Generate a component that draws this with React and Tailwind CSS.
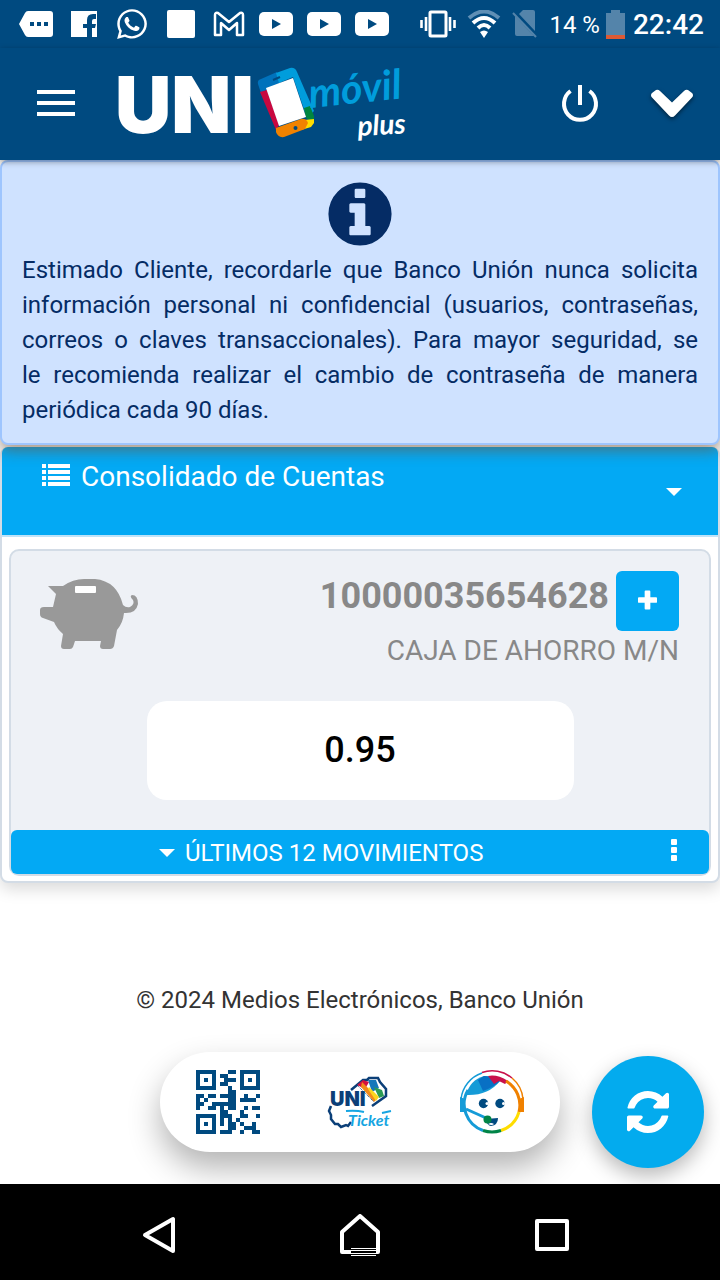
import React from "react";
import { FaWhatsapp } from "react-icons/fa";

const QR_ROWS = [
  "#####...##.#####",
  "#...#.##...#...#",
  "#.#.#..###.#.#.#",
  "#...#.##...#...#",
  "#####...#..#####",
  "........##......",
  "##.##.####..#..#",
  "#.#.....##.####.",
  "##..######......",
  "#..##.#.##..#.##",
  "......##...#....",
  "#####.###..##..#",
  "#...#.#.#.#.....",
  "#.#.#.#.##.#..#.",
  "#...#...##..###.",
  "#####.###..#..##",
];

function YoutubeIcon() {
  return (
    <svg width="34" height="24" viewBox="0 0 34 24">
      <rect width="34" height="24" rx="5" fill="white" />
      <path d="M13 7v10l9-5z" fill="#004a80" />
    </svg>
  );
}

function StatusBar() {
  return (
    <div className="flex h-12 items-center justify-between bg-[#004a80] pr-4 pl-[19px] font-[Roboto,sans-serif] text-white">
      <div className="flex items-center gap-[14px]">
        <div className="flex items-center gap-[18px]">
          <svg width="34" height="26" viewBox="0 0 34 26">
            <path d="M9 0h22q3 0 3 3v20q0 3-3 3H9q-2 0-3-2L0 13 6 2q1-2 3-2z" fill="white" />
            <path d="M11 11h4v4h-4zM18 11h4v4h-4zM25 11h4v4h-4z" fill="#004a80" />
          </svg>
          <svg width="26" height="26" viewBox="0 0 26 26">
            <path d="M0 0h26v26h-5v-9h3l1-4h-4v-3q0-2 2-2h2V3h-3q-6 0-6 6v4h-4v4h4v9H0z" fill="white" />
          </svg>
          <FaWhatsapp size={34} />
          <svg width="28" height="28">
            <rect width="28" height="28" rx="2" fill="white" />
          </svg>
          <svg width="32" height="26" viewBox="0 0 32 26">
            <path
              d="M2 24V4q0-3 3-2l11 9 11-9q3-1 3 2v20h-6V12l-8 7-8-7v12z"
              fill="none"
              stroke="white"
              strokeWidth="2.5"
              strokeLinejoin="round"
            />
          </svg>
        </div>
        <YoutubeIcon />
        <YoutubeIcon />
        <YoutubeIcon />
      </div>
      <div className="flex items-center gap-[6px]">
        <div className="flex items-center gap-[11px]">
          <svg width="36" height="28" viewBox="0 0 36 28">
            <rect x="10" y="2" width="16" height="24" rx="1" fill="none" stroke="white" strokeWidth="3" />
            <path d="M1.500 10v8M6 7v14M30 7v14M34.500 10v8" stroke="white" strokeWidth="2.600" />
          </svg>
          <svg width="34" height="28" viewBox="0 0 34 28" fill="none" strokeWidth="4">
            <path d="M2 8Q17-5 32 8" stroke="#5f8fb5" />
            <path d="M6 13Q17 3 28 13M11 18Q17 12 23 18" stroke="white" />
            <path d="M13 22q4-3 8 0l-4 6z" fill="white" />
          </svg>
          <svg width="26" height="28" viewBox="0 0 26 28">
            <path d="M11 0h10q2 0 2 2v19L7 4zM3 6l19 20H5q-2 0-2-2z" fill="#5484aa" />
            <path d="M1 3l23 24" stroke="#5484aa" strokeWidth="2" />
          </svg>
          <span className="pt-[2px] text-2xl leading-8">14 %</span>
        </div>
        <div className="flex items-center gap-2">
          <svg width="19" height="29" viewBox="0 0 19 29">
            <path d="M5 0h9v3h5v26H0V3h5z" fill="#5484aa" />
            <path d="M0 25h19v4H0z" fill="#dd5a35" />
          </svg>
          <span className="pt-[2px] text-[28px] leading-8 font-medium">22:42</span>
        </div>
      </div>
    </div>
  );
}

function Logo() {
  return (
    <svg width="296" height="110" viewBox="-6 -14 296 110" role="img" aria-label="UNI móvil plus">
      <text x="-3" y="71" fill="white" fontFamily="Inter, sans-serif" fontWeight="900" fontSize="78">
        UNI
      </text>
      <g>
        <path d="M143 31l-3-9q-1-4 3-5l16-7 4 13-15 5z" fill="#0072bc" />
        <path d="M158 11l14-5q5-1 7 4l17 39-7 7-14-41-14 6z" fill="#009ddc" />
        <path d="M142 30l7-2 12 35-3 5z" fill="#c8083f" />
        <path d="M186 46l6-2 4 10v7l-8-5z" fill="#00853f" />
        <path d="M186 58l10-1v4l-3 4-10 3z" fill="#ffdd00" />
        <path d="M158 66l25-9q5-1 7 4l-3 6-21 8q-6 1-8-5z" fill="#f08200" />
        <path d="M148 26l27-10 13 39-27 9z" fill="white" />
        <circle cx="177.500" cy="66" r="2" fill="#004a80" />
        <path d="M155 18l7-3" stroke="#004a80" strokeWidth="2" />
      </g>
      <text
        x="192"
        y="46"
        transform="rotate(-6 192 46)"
        fill="#009ddc"
        fontFamily="Lato, sans-serif"
        fontStyle="italic"
        fontWeight="700"
        fontSize="41"
      >
        móvil
      </text>
      <text
        x="240"
        y="74"
        transform="rotate(-3 240 74)"
        fill="white"
        fontFamily="Lato, sans-serif"
        fontStyle="italic"
        fontWeight="700"
        fontSize="28"
      >
        plus
      </text>
    </svg>
  );
}

function Header() {
  return (
    <header className="relative z-20 flex h-28 items-center justify-between bg-[#004a80] pr-6 pb-[2px] pl-[37px] shadow-[0_2px_6px_rgba(0,0,0,0.35)]">
      <div className="flex items-center gap-[37px]">
        <button aria-label="Menú">
          <svg width="38" height="28" viewBox="0 0 38 28">
            <path d="M0 3h38M0 14h38M0 25h38" stroke="white" strokeWidth="4" />
          </svg>
        </button>
        <Logo />
      </div>
      <div className="flex items-center gap-12">
        <button aria-label="Salir">
          <svg width="40" height="40" viewBox="0 0 40 40" fill="none" stroke="white" strokeWidth="4">
            <path d="M20 2v20" />
            <path d="M10.500 8a16 16 0 1 0 19 0" />
          </svg>
        </button>
        <button aria-label="Más opciones">
          <svg width="48" height="40" viewBox="0 0 48 40" className="drop-shadow-[0_2px_2px_rgba(0,0,0,0.5)]">
            <path
              d="M4 10l4-3q2-1 4 1l12 11.500L36 8q2-2 4-1l4 3q2 2 0 4.500L27 32.500q-3 3-6 0L4 14.500q-2-2.500 0-4.500z"
              fill="white"
            />
          </svg>
        </button>
      </div>
    </header>
  );
}

function InfoIcon() {
  return (
    <svg width="64" height="64" viewBox="0 0 1536 1536" fill="currentColor" className="mx-auto mb-[7px]">
      <path
        fillRule="evenodd"
        d="M1024 1248v-160q0-14-9-23t-23-9h-96V544q0-14-9-23t-23-9H544q-14 0-23 9t-9 23v160q0 14 9 23t23 9h96v320h-96q-14 0-23 9t-9 23v160q0 14 9 23t23 9h448q14 0 23-9t9-23zM896 352V192q0-14-9-23t-23-9H672q-14 0-23 9t-9 23v160q0 14 9 23t23 9h192q14 0 23-9t9-23zM768 10a758 758 0 1 1 0 1516a758 758 0 1 1 0-1516z"
      />
    </svg>
  );
}

function PiggyBank() {
  return (
    <svg width="98" height="70" viewBox="0 0 98 70" fill="#999">
      <path d="M8 7h15Q33 0 44 0h11q22 2 28 26 3 3 7 2 5-3 3-7-4-4-1-5 6 0 6 9-2 10-14 9-1 10-7 17l-3 16q-1 3-4 3h-7q-3 0-3-3l1-5H35l-2 6q-1 2-3 2h-6q-3 0-3-3l2-12q-6-5-9-12L3 39q-3-1-3-4v-4q0-3 4-3h9l3-13z" />
      <rect x="35" y="7" width="21" height="7" rx="1" fill="white" />
    </svg>
  );
}

function CaretDown() {
  return (
    <svg width="16" height="8" viewBox="0 0 16 8" fill="currentColor">
      <path d="M0 0h16L8 8z" />
    </svg>
  );
}

function AccountCard() {
  return (
    <section className="mt-[2px] rounded-lg border-2 border-[#d3dce6] bg-white shadow-[0_6px_16px_rgba(0,0,0,0.15)]">
      <button className="-mt-[2px] flex h-[90px] w-full items-start justify-between rounded-t-md border-b-2 border-[#bfe3f8] bg-[#03a9f4] pt-3 pr-9 pl-10 text-white">
        <span className="flex items-center gap-[11px] text-[28px] leading-9">
          <svg width="28" height="22" viewBox="0 0 28 22" fill="white" className="mb-1">
            <path d="M0 0h4v4H0zM6 0h22v4H6zM0 6h4v4H0zM6 6h22v4H6zM0 12h4v4H0zM6 12h22v4H6zM0 18h4v4H0zM6 18h22v4H6z" />
          </svg>
          Consolidado de Cuentas
        </span>
        <span className="pt-[29px]">
          <CaretDown />
        </span>
      </button>
      <div className="px-[7px] pt-3 pb-[5px]">
        <div className="rounded-[10px] border-2 border-[#d3dce6] bg-[#eef1f6]">
          <div className="flex items-start justify-between pt-5 pr-[30px] pl-[29px]">
            <div className="pt-2">
              <PiggyBank />
            </div>
            <div>
              <div className="flex items-center justify-end gap-[7px]">
                <span className="pb-[10px] text-4xl font-bold text-[#888]">10000035654628</span>
                <button
                  aria-label="Ver detalle de la cuenta"
                  className="flex h-[60px] w-[63px] items-center justify-center rounded-md bg-[#03a9f4] pb-[2px]"
                >
                  <svg width="19" height="20" viewBox="0 0 20 20" fill="white">
                    <path d="M8 0h4q1 0 1 1v6h6q1 0 1 1v4q0 1-1 1h-6v6q0 1-1 1H8q-1 0-1-1v-6H1q-1 0-1-1V8q0-1 1-1h6V1q0-1 1-1z" />
                  </svg>
                </button>
              </div>
              <p className="text-right text-[28px] leading-10 text-[#888]">CAJA DE AHORRO M/N</p>
            </div>
          </div>
          <div className="mx-auto mt-[30px] mb-[30px] flex h-[99px] w-[427px] items-center justify-center rounded-[20px] bg-white pb-[2px] text-4xl font-medium text-black">
            0.95
          </div>
          <div className="flex h-11 items-center justify-between rounded-md bg-[#03a9f4] pr-7 text-white">
            <button className="ml-[148px] flex items-center gap-[10px] pt-[2px] text-2xl leading-8">
              <CaretDown />
              ÚLTIMOS 12 MOVIMIENTOS
            </button>
            <button aria-label="Opciones" className="flex w-[14px] justify-center pb-1">
              <svg width="6" height="22" viewBox="0 0 6 22" fill="white">
                <rect width="6" height="6" rx="1" />
                <rect y="8" width="6" height="6" rx="1" />
                <rect y="16" width="6" height="6" rx="1" />
              </svg>
            </button>
          </div>
        </div>
      </div>
    </section>
  );
}

function QrIcon() {
  return (
    <svg width="64" height="64" viewBox="0 0 16 16" fill="#004a80" shapeRendering="crispEdges">
      {QR_ROWS.map((row, y) =>
        row.split("").map((cell, x) => (cell === "#" ? <rect key={`${x}-${y}`} x={x} y={y} width="1" height="1" /> : null))
      )}
    </svg>
  );
}

function TicketIcon() {
  return (
    <svg width="68" height="64" viewBox="0 0 68 64">
      <path d="M25 20L37 10h4l2-2h9l2 4 6 7v7L46 36" fill="none" stroke="#0b3f78" strokeWidth="2.500" />
      <path d="M31 15l6-5 6 2-4 7z" fill="#d4113f" />
      <path d="M42 10h8l3 8-7 4z" fill="#1577ba" />
      <path d="M48 17l8 3 2 6-5 2z" fill="#2c9b54" />
      <path d="M36 12l6 6 9 11-3 3-13-15z" fill="#f18a1b" />
      <path d="M43 17l10 10-3 4-8-12z" fill="#fbd51d" />
      <path d="M31 15l17 17" stroke="#0b3f78" strokeWidth="1" strokeDasharray="1 1" />
      <path d="M5 36l-2 5 2 4v4l4 5h3l3 3 5-2 2 1 3-4" fill="none" stroke="#0b3f78" strokeWidth="2.500" />
      <text x="4" y="36" fontFamily="Inter, sans-serif" fontWeight="900" fontSize="20" fill="#0b3f78">
        UNI
      </text>
      <text x="22" y="56" fontFamily="Lato, sans-serif" fontStyle="italic" fontWeight="700" fontSize="16" fill="#16a5e2">
        Ticket
      </text>
      <path d="M20 41q10-1 18 1M56 43l9-2" stroke="#16a5e2" strokeWidth="2" fill="none" />
    </svg>
  );
}

function AssistantIcon() {
  return (
    <svg width="64" height="64" viewBox="0 0 64 64" fill="none">
      <path d="M6 25Q10 10 24 6l12 1 4 4Q28 26 6 25z" fill="#159bd7" />
      <path d="M18 10l6-4 12 1 4 4q-6 6-17 10z" fill="#0870c4" />
      <path d="M28 6q9-2 20 5l-3 3-6-3-5 3z" fill="#c8104b" />
      <g strokeWidth="3">
        <path d="M8 20A28 28 0 0 0 23 60.500" stroke="#159bd7" />
        <path d="M46 11A28 28 0 0 1 59 42" stroke="#f08100" />
        <path d="M59 42A28 28 0 0 1 41 60.500" stroke="#ffdd00" />
        <path d="M41 60.500A28 28 0 0 1 23 60.500" stroke="#008447" />
      </g>
      <g strokeWidth="1.500">
        <path d="M1 29A31 31 0 0 1 22 3" stroke="#159bd7" />
        <path d="M22 2.500A31 31 0 0 1 52 8" stroke="#c8104b" />
        <path d="M52 8A31 31 0 0 1 63 29" stroke="#f08100" />
      </g>
      <path d="M0 27l5 2v13H0z" fill="#159bd7" />
      <path d="M64 27l-5 2v13h5z" fill="#f08100" />
      <path d="M6 39l20 9" stroke="#159bd7" strokeWidth="3" />
      <circle cx="23.500" cy="33.500" r="4.700" fill="#004a80" />
      <circle cx="40" cy="33.500" r="4.700" fill="#004a80" />
      <circle cx="27" cy="33.500" r="1.500" fill="white" />
      <circle cx="43.500" cy="33.500" r="1.500" fill="white" />
      <path d="M26 49l12-1q0 7-7 8-4 0-5-7z" fill="#004a80" />
      <path d="M28 54q3-2 6 0-2 2-6 0z" fill="white" />
      <circle cx="27.500" cy="49.500" r="4" fill="#008447" />
    </svg>
  );
}

function BottomActions() {
  return (
    <div className="flex items-center justify-end gap-8 pr-4 pb-4">
      <div className="flex h-[100px] w-[400px] items-center justify-between rounded-full bg-white px-9 shadow-[0_16px_32px_rgba(0,0,0,0.3)]">
        <button aria-label="Código QR">
          <QrIcon />
        </button>
        <button aria-label="UNI Ticket">
          <TicketIcon />
        </button>
        <button aria-label="Asistente">
          <AssistantIcon />
        </button>
      </div>
      <button
        aria-label="Actualizar"
        className="mt-5 flex size-28 items-center justify-center rounded-full bg-[#03abee] shadow-[0_8px_20px_rgba(0,0,0,0.28)]"
      >
        <svg width="42" height="42" viewBox="0 0 1536 1536" fill="white">
          <path d="M1511 928q0 5-1 7-64 268-268 434.500T764 1536q-146 0-282.500-55T238 1324l-129 129q-19 19-45 19t-45-19-19-45V960q0-26 19-45t45-19h448q26 0 45 19t19 45-19 45l-137 137q71 66 161 102t187 36q134 0 250-65t186-179q11-17 53-117 8-23 30-23h192q13 0 22.500 9.500t9.500 22.500zm25-800v448q0 26-19 45t-45 19h-448q-26 0-45-19t-19-45 19-45l138-138Q969 256 768 256q-134 0-250 65T332 500q-11 17-53 117-8 23-30 23H50q-13 0-22.500-9.500T18 608v-7q65-268 270-434.500T768 0q146 0 284 55.500T1297 212l130-129q19-19 45-19t45 19 19 45z" />
        </svg>
      </button>
    </div>
  );
}

function NavigationBar() {
  return (
    <nav className="relative z-10 flex h-24 items-center justify-center bg-black pt-[6px]">
      <button aria-label="Atrás" className="flex w-48 justify-center pr-[18px]">
        <svg width="34" height="38" viewBox="0 0 34 38" fill="none" stroke="white" strokeWidth="4" strokeLinejoin="round">
          <path d="M31 3v32L3 19z" />
        </svg>
      </button>
      <button aria-label="Inicio" className="flex w-48 justify-center">
        <svg width="40" height="42" viewBox="0 0 40 42" fill="none" stroke="white" strokeWidth="4" strokeLinejoin="round">
          <path d="M2 38V18L20 2l18 16v20z" />
          <path d="M11 33h25v9H11z" fill="black" stroke="none" />
          <path d="M11 34.500h25M11 36.500h25M11 39.500h25M11 41.500h25" strokeWidth="1" />
        </svg>
      </button>
      <button aria-label="Recientes" className="flex w-48 justify-center">
        <svg width="34" height="32" viewBox="0 0 34 32" fill="none" stroke="white" strokeWidth="4" strokeLinejoin="round">
          <path d="M2 2h30v28H2z" />
        </svg>
      </button>
    </nav>
  );
}

export default function App() {
  return (
    <div className="flex min-h-screen flex-col bg-white font-[Roboto,sans-serif]">
      <StatusBar />
      <Header />
      <main className="flex flex-1 flex-col">
        <div
          role="alert"
          className="relative z-10 rounded-lg border-2 border-[#9ec5fe] bg-[#cfe2ff] px-5 pt-5 pb-[15px] text-[#052c65] shadow-[0_6px_14px_rgba(110,85,60,0.6)]"
        >
          <InfoIcon />
          <p className="text-justify text-2xl leading-[35px]">
            Estimado Cliente, recordarle que Banco Unión nunca solicita información personal ni confidencial (usuarios,
            contraseñas, correos o claves transaccionales). Para mayor seguridad, se le&nbsp;recomienda realizar el
            cambio de contraseña de manera periódica cada 90 días.
          </p>
        </div>
        <AccountCard />
        <p className="mt-[101px] text-center text-2xl leading-8 text-[#333]">
          © 2024 Medios Electrónicos, Banco Unión
        </p>
        <div className="mt-auto">
          <BottomActions />
        </div>
      </main>
      <NavigationBar />
    </div>
  );
}
